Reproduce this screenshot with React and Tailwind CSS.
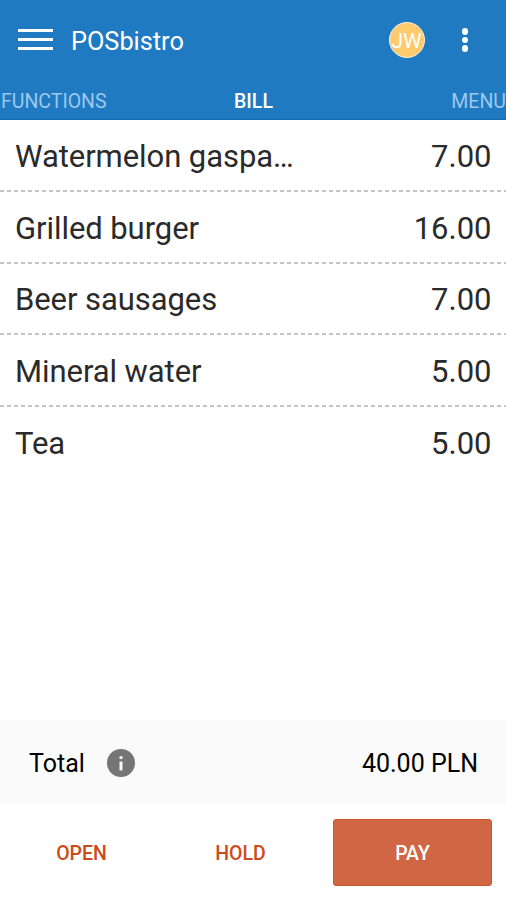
const items = [
    { name: "Watermelon gaspa…", price: "7.00" },
    { name: "Grilled burger", price: "16.00" },
    { name: "Beer sausages", price: "7.00" },
    { name: "Mineral water", price: "5.00" },
    { name: "Tea", price: "5.00" },
];

function Header() {
    return (
        <header className="h-[120px] bg-[#1f7ac1] border-b border-[#166bb0] text-white">
            <div className="h-20 flex items-center pl-[18px] pr-[38px]">
                <button className="flex flex-col gap-[6px] -mt-px" aria-label="Open navigation">
                    <span className="block w-[35px] h-[3px] bg-white" />
                    <span className="block w-[35px] h-[3px] bg-white" />
                    <span className="block w-[35px] h-[3px] bg-white" />
                </button>
                <h1 className="ml-[18px] pt-[3px] text-[25.3px] leading-8">POSbistro</h1>

                {/* Logged in user */}
                <div className="ml-auto w-9 h-9 rounded-full bg-[#fdca6e] border-[1.5px] border-[#fff3dc] flex items-center justify-center text-[21px] leading-none pt-[3px] tracking-[-0.2px]">
                    JW
                </div>
                <button className="ml-[37px] flex flex-col gap-[2px]" aria-label="More options">
                    <span className="block w-[6.5px] h-[6.5px] rounded-full bg-white" />
                    <span className="block w-[6.5px] h-[6.5px] rounded-full bg-white" />
                    <span className="block w-[6.5px] h-[6.5px] rounded-full bg-white" />
                </button>
            </div>

            {/* Tabs */}
            <nav className="grid grid-cols-3 h-[39px] items-center text-[19.5px] leading-6 text-[#9cc8ec] pt-[4px]">
                <span className="pl-px">FUNCTIONS</span>
                <span className="text-center text-white font-medium pl-px">BILL</span>
                <span className="text-right">MENU</span>
            </nav>
        </header>
    );
}

function BillRow({ item, last }) {
    return (
        <li>
            <div className="h-[69.8px] flex items-center justify-between pl-[15px] pr-[14.5px] pt-[4px] text-[31px] leading-9 text-[#2a2a2a]">
                <span className="tracking-[-0.07px]">{item.name}</span>
                <span>{item.price}</span>
            </div>
            {!last && (
                <div className="h-[2px] bg-[repeating-linear-gradient(90deg,#c4c4c4_0_4.5px,transparent_4.5px_7px)]" />
            )}
        </li>
    );
}

export default function App() {
    return (
        <div className="w-[506px] h-[900px] flex flex-col bg-white overflow-hidden font-['Roboto',sans-serif]">
            <Header />

            <ul className="flex-1">
                {items.map((item, i) => (
                    <BillRow key={item.name} item={item} last={i === items.length - 1} />
                ))}
            </ul>

            <div className="h-[84px] bg-[#fafafa] flex items-center pl-[29px] pr-7 text-[25px] leading-8 text-black">
                <span className="pt-[4px]">Total</span>
                <svg className="ml-[22px] mt-[2px] w-7 h-7" viewBox="0 0 28 28">
                    <circle cx="14" cy="14" r="14" fill="#757575" />
                    <circle cx="14" cy="8.6" r="1.7" fill="#fafafa" />
                    <rect x="12.5" y="12.5" width="3" height="9" rx="0.8" fill="#fafafa" />
                </svg>
                <span className="ml-auto pt-[4px]">40.00 PLN</span>
            </div>

            <div className="h-24 flex items-center pl-[2px] pr-[14px] text-[19.5px] font-medium text-[#ce4a1b]">
                <button className="w-[159px] h-[67px] pt-[4px]">OPEN</button>
                <button className="w-[159px] h-[67px] pt-[4px]">HOLD</button>
                <button className="ml-auto w-[159px] h-[67px] pt-[4px] rounded-[3px] bg-[#d06643] border border-[#c9562f] text-white">
                    PAY
                </button>
            </div>
        </div>
    );
}
